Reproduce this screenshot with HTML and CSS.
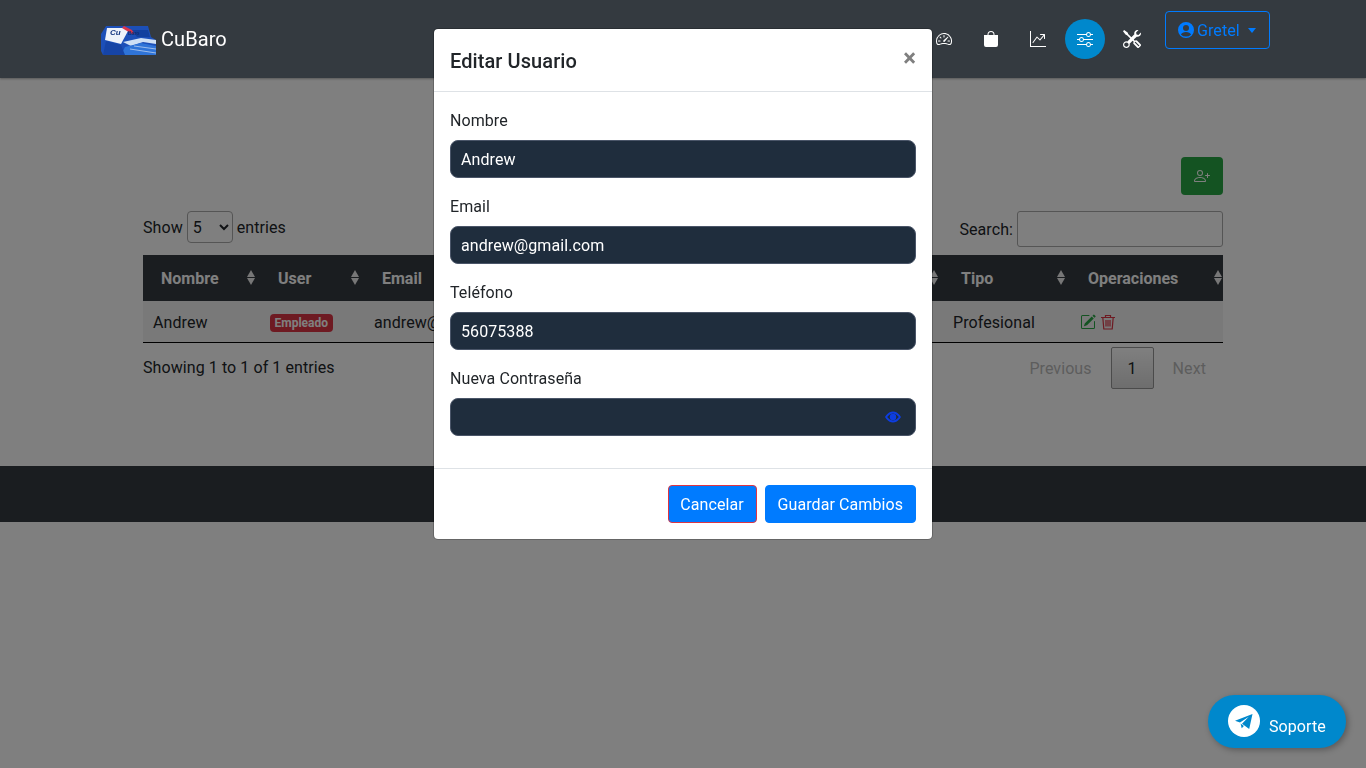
FILE: index.html
```html
<!DOCTYPE html>
<html lang="es">
<head>
    <meta charset="UTF-8">
    <meta name="viewport" content="width=device-width, initial-scale=1.0">
    <title>CuBaro</title>
    <link rel="stylesheet" href="styles.css">
</head>
<body>

    <nav class="navbar">
        <a class="brand" href="#">
            <svg class="brand-logo" viewBox="0 0 55 30" width="55" height="30">
                <path d="M5 1H47L50 12 55 15V30H2L0 26V9Z" fill="#1c4fb8"/>
                <path d="M6 3 25 3 27 6 20 19 4 15Z" fill="#eef2fa"/>
                <path d="M23 1 37 8 31 9 21 3Z" fill="#d8354a"/>
                <path d="M31 5H47L49 12H36Z" fill="#12409f"/>
                <path d="M22 17 40 13 55 15V19L42 17 30 21Z" fill="#cfe0f5"/>
                <path d="M24 22 40 18 55 21V30H20Z" fill="#2f74d8"/>
                <path d="M33 21 55 24M29 24 55 28" stroke="#9dbcea" stroke-width="1"/>
                <path d="M2 30 5 16 20 20 24 30Z" fill="#1644a6"/>
                <text x="9" y="10" class="brand-logo-text">Cu</text>
                <text x="27" y="10" class="brand-logo-small">Baro</text>
            </svg>
            <span>CuBaro</span>
        </a>
        <ul class="nav-icons">
            <li>
                <svg viewBox="0 0 16 16" width="16" height="16" fill="currentColor"><path d="M8 4a.5.5 0 0 1 .5.5V6a.5.5 0 0 1-1 0V4.5A.5.5 0 0 1 8 4zM3.732 5.732a.5.5 0 0 1 .707 0l.915.914a.5.5 0 1 1-.708.708l-.914-.915a.5.5 0 0 1 0-.707zM2 10a.5.5 0 0 1 .5-.5h1.586a.5.5 0 0 1 0 1H2.5A.5.5 0 0 1 2 10zm9.5 0a.5.5 0 0 1 .5-.5h1.5a.5.5 0 0 1 0 1H12a.5.5 0 0 1-.5-.5zm.754-4.246a.389.389 0 0 0-.527-.02L7.547 9.31a.91.91 0 1 0 1.302 1.258l3.434-4.297a.389.389 0 0 0-.029-.518z"/><path fill-rule="evenodd" d="M0 10a8 8 0 1 1 15.547 2.661c-.442 1.253-1.845 1.602-2.932 1.25C11.309 13.488 9.475 13 8 13c-1.474 0-3.31.488-4.615.911-1.087.352-2.49.003-2.932-1.25A7.988 7.988 0 0 1 0 10zm8-7a7 7 0 0 0-6.603 9.329c.203.575.923.876 1.68.63C4.397 12.533 6.358 12 8 12s3.604.532 4.923.96c.757.245 1.477-.056 1.68-.631A7 7 0 0 0 8 3z"/></svg>
            </li>
            <li>
                <svg viewBox="0 0 16 16" width="16" height="16" fill="currentColor"><path d="M8 1a2.5 2.5 0 0 1 2.5 2.5V4h-5v-.5A2.5 2.5 0 0 1 8 1zm3.5 3v-.5a3.5 3.5 0 1 0-7 0V4H1v10a2 2 0 0 0 2 2h10a2 2 0 0 0 2-2V4h-3.5z"/></svg>
            </li>
            <li>
                <svg viewBox="0 0 16 16" width="16" height="16" fill="currentColor"><path fill-rule="evenodd" d="M0 0h1v15h15v1H0V0Zm10 3.5a.5.5 0 0 1 .5-.5h4a.5.5 0 0 1 .5.5v4a.5.5 0 0 1-1 0V4.9l-3.613 4.417a.5.5 0 0 1-.74.037L7.06 6.767l-3.656 5.027a.5.5 0 0 1-.808-.588l4-5.5a.5.5 0 0 1 .758-.06l2.609 2.61L13.445 4H10.5a.5.5 0 0 1-.5-.5Z"/></svg>
            </li>
            <li class="active">
                <svg viewBox="0 0 16 16" width="16" height="16" fill="currentColor"><path fill-rule="evenodd" d="M11.5 2a1.5 1.5 0 1 0 0 3 1.5 1.5 0 0 0 0-3zM9.05 3a2.5 2.5 0 0 1 4.9 0H16v1h-2.05a2.5 2.5 0 0 1-4.9 0H0V3h9.05zM4.5 7a1.5 1.5 0 1 0 0 3 1.5 1.5 0 0 0 0-3zM2.05 8a2.5 2.5 0 0 1 4.9 0H16v1H6.95a2.5 2.5 0 0 1-4.9 0H0V8h2.05zm9.45 4a1.5 1.5 0 1 0 0 3 1.5 1.5 0 0 0 0-3zm-2.45 1a2.5 2.5 0 0 1 4.9 0H16v1h-2.05a2.5 2.5 0 0 1-4.9 0H0v-1h9.05z"/></svg>
            </li>
            <li>
                <svg viewBox="0 0 16 16" width="18" height="18" fill="currentColor"><path d="M1 0 0 1l2.2 3.081a1 1 0 0 0 .815.419h.07a1 1 0 0 1 .708.293l2.675 2.675-2.617 2.654A3.003 3.003 0 0 0 0 13a3 3 0 1 0 5.878-.851l2.654-2.617.968.968-.305.914a1 1 0 0 0 .242 1.023l3.27 3.27a.997.997 0 0 0 1.414 0l1.586-1.586a.997.997 0 0 0 0-1.414l-3.27-3.27a1 1 0 0 0-1.023-.242L10.5 9.5l-.96-.96 2.68-2.643A3.005 3.005 0 0 0 16 3c0-.269-.035-.53-.102-.777l-2.14 2.141L12 4l-.364-1.757L13.777.102a3 3 0 0 0-3.675 3.68L7.462 6.46 4.793 3.793a1 1 0 0 1-.293-.707v-.071a1 1 0 0 0-.419-.814L1 0Zm9.646 10.646a.5.5 0 0 1 .708 0l2.914 2.915a.5.5 0 0 1-.707.707l-2.915-2.914a.5.5 0 0 1 0-.708ZM3 11l.471.242.529.026.287.445.445.287.026.529L5 13l-.242.471-.026.529-.445.287-.287.445-.529.026L3 15l-.471-.242L2 14.732l-.287-.445L1.268 14l-.026-.529L1 13l.242-.471.026-.529.445-.287.287-.445.529-.026L3 11Z"/></svg>
            </li>
        </ul>
        <button class="user-button" type="button">
            <svg viewBox="0 0 16 16" width="16" height="16" fill="currentColor"><path fill-rule="evenodd" d="M0 8a8 8 0 1 1 16 0A8 8 0 0 1 0 8zm11-2a3 3 0 1 0-6 0 3 3 0 0 0 6 0zM2.9 12.4A6.9 6.9 0 0 0 8 14.6a6.9 6.9 0 0 0 5.1-2.2C12.2 11 10.6 10 8 10s-4.200 1-5.100 2.400z"/></svg>
            <span>Gretel</span>
            <i class="caret"></i>
        </button>
    </nav>

    <main class="content">
        <div class="toolbar">
            <button class="add-button" type="button">
                <svg viewBox="0 0 16 16" width="16" height="16" fill="currentColor"><path d="M6 8a3 3 0 1 0 0-6 3 3 0 0 0 0 6zm2-3a2 2 0 1 1-4 0 2 2 0 0 1 4 0zm4 8c0 1-1 1-1 1H1s-1 0-1-1 1-4 6-4 6 3 6 4zm-1-.004c-.001-.246-.154-.986-.832-1.664C9.516 10.68 8.289 10 6 10c-2.29 0-3.516.68-4.168 1.332-.678.678-.83 1.418-.832 1.664h10z"/><path fill-rule="evenodd" d="M13.5 5a.5.5 0 0 1 .5.5V7h1.5a.5.5 0 0 1 0 1H14v1.5a.5.5 0 0 1-1 0V8h-1.5a.5.5 0 0 1 0-1H13V5.5a.5.5 0 0 1 .5-.5z"/></svg>
            </button>
        </div>

        <div class="table-controls">
            <label class="length-control">
                <span>Show</span>
                <select class="length-select"><option>5</option><option>10</option></select>
                <span>entries</span>
            </label>
            <label class="search-control">
                <span>Search:</span>
                <input class="search-input" type="search">
            </label>
        </div>

        <table class="users-table">
            <thead>
                <tr>
                    <th class="col-nombre">Nombre</th>
                    <th class="col-user">User</th>
                    <th class="col-email">Email</th>
                    <th class="col-telefono">Teléfono</th>
                    <th class="col-tipo">Tipo</th>
                    <th class="col-ops">Operaciones</th>
                </tr>
            </thead>
            <tbody>
                <tr>
                    <td>Andrew</td>
                    <td class="user-cell"><span class="badge">Empleado</span></td>
                    <td>andrew@gmail.com</td>
                    <td>56075388</td>
                    <td>Profesional</td>
                    <td class="ops">
                        <svg class="icon-edit" viewBox="0 0 16 16" width="16" height="16" fill="currentColor"><path d="M15.502 1.94a.5.5 0 0 1 0 .706L14.459 3.69l-2-2L13.502.646a.5.5 0 0 1 .707 0l1.293 1.293zm-1.75 2.456-2-2L4.939 9.21a.5.5 0 0 0-.121.196l-.805 2.414a.25.25 0 0 0 .316.316l2.414-.805a.5.5 0 0 0 .196-.12l6.813-6.814z"/><path fill-rule="evenodd" d="M1 13.5A1.5 1.5 0 0 0 2.500 15h11a1.500 1.500 0 0 0 1.500-1.500v-6a.5.5 0 0 0-1 0v6a.5.5 0 0 1-.5.5h-11a.5.5 0 0 1-.5-.5v-11a.5.5 0 0 1 .5-.5H9a.5.5 0 0 0 0-1H2.500A1.500 1.500 0 0 0 1 2.500v11z"/></svg>
                        <svg class="icon-delete" viewBox="0 0 16 16" width="16" height="16" fill="none" stroke="currentColor" stroke-width="1.200"><path d="M1 3.500H15M5.500 3.500V1.500H10.500V3.500M2.800 3.500 3.800 15H12.200L13.200 3.500M6 6V12.500M8 6V12.500M10 6V12.500"/></svg>
                    </td>
                </tr>
            </tbody>
        </table>

        <div class="table-footer">
            <span>Showing 1 to 1 of 1 entries</span>
            <div class="pagination">
                <span class="page-link page-prev">Previous</span>
                <span class="page-current">1</span>
                <span class="page-link page-next">Next</span>
            </div>
        </div>
    </main>

    <footer class="page-footer"></footer>

    <div class="backdrop"></div>

    <div class="modal">
        <div class="modal-header">
            <h5>Editar Usuario</h5>
            <span class="close">×</span>
        </div>
        <form class="modal-body">
            <div class="form-group">
                <label>Nombre</label>
                <input class="form-control" type="text" value="Andrew">
            </div>
            <div class="form-group">
                <label>Email</label>
                <input class="form-control" type="text" value="andrew@gmail.com">
            </div>
            <div class="form-group">
                <label>Teléfono</label>
                <input class="form-control" type="text" value="56075388">
            </div>
            <div class="form-group">
                <label>Nueva Contraseña</label>
                <div class="password-wrap">
                    <input class="form-control" type="password">
                    <svg class="eye" viewBox="0 0 16 16" width="16" height="16" fill="currentColor"><path fill-rule="evenodd" d="M0 8s3-5.500 8-5.500S16 8 16 8s-3 5.500-8 5.500S0 8 0 8zm2.200 0C3.200 9.200 5.200 11.500 8 11.500s4.800-2.300 5.800-3.500C12.800 6.800 10.800 4.500 8 4.500S3.200 6.800 2.200 8z"/><circle cx="8" cy="8" r="3.200"/></svg>
                </div>
            </div>
        </form>
        <div class="modal-footer">
            <button class="btn btn-cancel" type="button">Cancelar</button>
            <button class="btn" type="button">Guardar Cambios</button>
        </div>
    </div>

    <a class="support" href="#">
        <span class="support-icon">
            <svg viewBox="0 0 32 32" width="32" height="32" fill="#0088cc"><path d="M24.500 9 7 15.800l5 1.800 8.800-5.800-6.800 7 7.200 5.200Z"/><path d="M12.600 18.500l1.100 4.800 2.200-2.400Z"/></svg>
        </span>
        <span>Soporte</span>
    </a>

</body>
</html>
```

FILE: styles.css
```css
* {
    box-sizing: border-box;
}

body {
    font-family: Roboto, sans-serif;
    font-size: 16px;
    line-height: 24px;
    letter-spacing: 0.08px;
    color: #212529;
    background-color: #ffffff;
    margin: 0;
    padding: 0;
}

/* navbar queda encima del backdrop */
.navbar {
    position: relative;
    z-index: 20;
    display: flex;
    align-items: flex-start;
    height: 78px;
    padding: 11px 96px 0 101px;
    background-color: #343a40;
    box-shadow: 0 1px 2px rgba(0, 0, 0, 0.3);
}

.brand {
    display: flex;
    align-items: center;
    margin-top: 14px;
    color: #ffffff;
    font-size: 20px;
    line-height: 30px;
    text-decoration: none;
}

.brand span {
    margin-top: -2px;
}

.brand-logo {
    margin-right: 5px;
}

.brand-logo-text {
    font-family: "Liberation Sans", sans-serif;
    font-size: 8px;
    font-weight: bold;
    font-style: italic;
    letter-spacing: 0;
    fill: #14357f;
}

.brand-logo-small {
    font-family: "Liberation Sans", sans-serif;
    font-size: 5px;
    font-weight: bold;
    letter-spacing: 0;
    fill: #0d2c70;
}

.nav-icons {
    display: flex;
    gap: 7px;
    list-style: none;
    margin: 8px 13px 0 auto;
    padding: 0;
    color: #ffffff;
}

.nav-icons li {
    display: flex;
    align-items: center;
    justify-content: center;
    width: 40px;
    height: 40px;
    border-radius: 50%;
}

.nav-icons li.active {
    background-color: #0088cc;
}

.user-button {
    display: flex;
    align-items: center;
    gap: 3px;
    width: 105px;
    height: 38px;
    padding: 0 12px;
    border: 1px solid #007bff;
    border-radius: 4px;
    background: transparent;
    color: #007bff;
    font-family: inherit;
    font-size: 16px;
    letter-spacing: inherit;
}

.caret {
    margin-left: 5px;
    border-top: 5px solid #007bff;
    border-left: 4px solid transparent;
    border-right: 4px solid transparent;
}

.content {
    width: 1080px;
    margin: 0 auto;
    padding-top: 79px;
}

.toolbar {
    display: flex;
    justify-content: flex-end;
}

.add-button {
    display: flex;
    align-items: center;
    justify-content: center;
    width: 42px;
    height: 38px;
    border: none;
    border-radius: 4px;
    background-color: #28a745;
    color: #ffffff;
}

.table-controls {
    display: flex;
    align-items: flex-start;
    justify-content: space-between;
    height: 44px;
    margin-top: 16px;
}

.length-control {
    display: flex;
    align-items: center;
    gap: 4px;
    height: 32px;
}

.length-control span,
.search-control span {
    margin-top: 2px;
}

.length-select {
    width: 46px;
    height: 32px;
    padding: 0 0 0 1px;
    border: 1px solid #aaaaaa;
    border-radius: 4px;
    background-color: #ffffff;
    color: #212529;
    font-family: inherit;
    font-size: 16px;
}

.search-control {
    display: flex;
    align-items: center;
    gap: 4px;
}

.search-input {
    width: 206px;
    height: 36px;
    border: 1px solid #aaaaaa;
    border-radius: 3px;
    background: transparent;
}

.users-table {
    width: 100%;
    table-layout: fixed;
    border-collapse: collapse;
}

.users-table th {
    position: relative;
    height: 46px;
    padding: 2px 18px 0;
    background-color: #343a40;
    color: #ffffff;
    font-weight: bold;
    letter-spacing: 0;
    text-align: left;
}

/* flechas de orden */
.users-table th::before,
.users-table th::after {
    content: "";
    position: absolute;
    right: 5px;
    border-left: 4.5px solid transparent;
    border-right: 4.5px solid transparent;
}

.users-table th.col-ops::before,
.users-table th.col-ops::after {
    right: 1px;
}

.users-table th::before {
    top: 15px;
    border-bottom: 7px solid #eeeeee;
}

.users-table th::after {
    top: 23px;
    border-top: 7px solid #eeeeee;
}

.users-table td {
    height: 41px;
    padding: 3px 10px 0;
    background-color: #f2f2f2;
    border-bottom: 1px solid #000000;
}

.users-table td.user-cell,
.users-table td.ops {
    padding-top: 1px;
}

.col-nombre { width: 117px; }
.col-user { width: 104px; }
.col-email { width: 290px; }
.col-telefono { width: 289px; }
.col-tipo { width: 127px; }
.col-ops { width: 153px; }

.badge {
    display: inline-block;
    padding: 2px 4.5px;
    border-radius: 4px;
    background-color: #dc3545;
    color: #ffffff;
    font-size: 12px;
    font-weight: bold;
    line-height: 14px;
    letter-spacing: 0;
    vertical-align: middle;
}

.ops {
    line-height: 0;
}

.ops svg {
    vertical-align: middle;
}

.icon-edit {
    color: #28a745;
}

.icon-delete {
    color: #dc3545;
}

.table-footer {
    display: flex;
    align-items: flex-start;
    justify-content: space-between;
    padding-top: 4px;
    padding-bottom: 77px;
}

.table-footer > span {
    padding-top: 9px;
}

.pagination {
    display: flex;
    align-items: center;
    height: 42px;
}

.page-link {
    margin-top: 2px;
    color: #bbbbbb;
}

.page-prev {
    padding-right: 19px;
}

.page-next {
    padding: 0 17px 0 19px;
}

.page-current {
    width: 43px;
    height: 42px;
    border: 1px solid #979797;
    border-radius: 2px;
    background: linear-gradient(to bottom, #ffffff, #dcdcdc);
    line-height: 41px;
    text-align: center;
}

.page-footer {
    height: 56px;
    background-color: #343a40;
}

.backdrop {
    position: fixed;
    inset: 0;
    z-index: 10;
    background-color: rgba(0, 0, 0, 0.5);
}

.modal {
    position: fixed;
    top: 28px;
    left: 433px;
    z-index: 30;
    width: 500px;
    border: 1px solid rgba(0, 0, 0, 0.2);
    border-radius: 5px;
    background-color: #ffffff;
    background-clip: padding-box;
}

.modal-header {
    display: flex;
    align-items: center;
    justify-content: space-between;
    height: 63px;
    padding: 0 16px;
    border-bottom: 1px solid #dee2e6;
}

.modal-header h5 {
    margin: 0;
    padding-top: 2px;
    font-size: 20px;
    font-weight: 500;
}

.close {
    margin-top: -4px;
    font-size: 24px;
    font-weight: bold;
    color: #7f7f7f;
}

.modal-body {
    padding: 16px 16px 0;
    height: 376px;
}

.form-group {
    margin-bottom: 16px;
}

.form-group label {
    display: block;
    padding-top: 1px;
    margin-bottom: 7px;
}

.form-control {
    display: block;
    width: 100%;
    height: 38px;
    padding: 0 10px;
    border: 1px solid #4a5568;
    border-radius: 8px;
    background-color: #1f2d3d;
    color: #ffffff;
    font-family: inherit;
    font-size: 16px;
    letter-spacing: inherit;
}

.password-wrap {
    position: relative;
}

.eye {
    position: absolute;
    top: 11px;
    right: 15px;
    color: #0d3de0;
}

.modal-footer {
    display: flex;
    justify-content: flex-end;
    gap: 8px;
    padding: 16px;
    border-top: 1px solid #dee2e6;
}

.btn {
    height: 38px;
    padding: 0 12px;
    border: 1px solid #007bff;
    border-radius: 4px;
    background-color: #007bff;
    color: #ffffff;
    font-family: inherit;
    font-size: 16px;
    letter-spacing: inherit;
}

.btn-cancel {
    width: 89px;
    padding: 0;
    border-color: #dc3545;
}

.support {
    position: fixed;
    right: 20px;
    bottom: 20px;
    z-index: 40;
    display: flex;
    align-items: flex-start;
    gap: 9px;
    width: 138px;
    height: 53px;
    padding: 10px 0 0 20px;
    border-radius: 27px;
    background-color: #0088cc;
    color: #ffffff;
    text-decoration: none;
    box-shadow: 2px 2px 6px rgba(0, 0, 0, 0.3);
}

.support-icon {
    display: block;
    width: 32px;
    height: 32px;
    border-radius: 50%;
    background-color: #ffffff;
}

.support span:last-child {
    margin-top: 10px;
}
```
